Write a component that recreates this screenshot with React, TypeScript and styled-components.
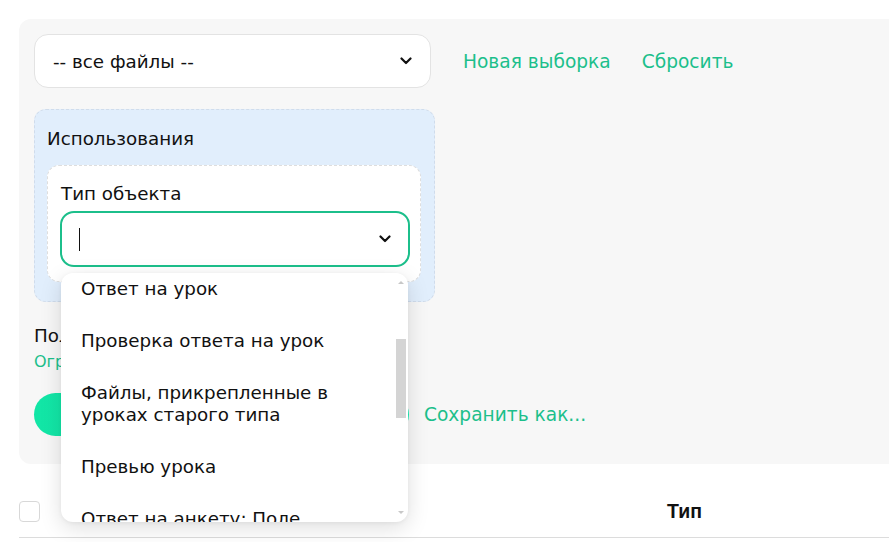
import React, { useLayoutEffect, useRef } from "react";
import styled, { createGlobalStyle } from "styled-components";

const FONT = `"DejaVu Sans", "Noto Sans", sans-serif`;
const GREEN = "#1cbf8b";
const FS = "18.3px";

const Global = createGlobalStyle`
  html, body { margin: 0; padding: 0; background: #fff; }
  body { font-family: ${FONT}; color: #111; overflow: hidden; }
  * { box-sizing: border-box; }
`;

const Page = styled.div`
  width: 889px;
  height: 542px;
  overflow: hidden;
  padding: 19px 0 0 19px;
`;

const FilterPanel = styled.section`
  width: 900px;
  height: 445px;
  background: #f7f7f7;
  border-radius: 12px 0 0 12px;
  padding: 15px 15px;
  display: flex;
  flex-direction: column;
`;

const TopRow = styled.div`
  display: flex;
  align-items: center;
`;

const Select = styled.div`
  width: 397px;
  height: 54px;
  background: #fff;
  border: 1px solid #e3e3e3;
  border-radius: 14px;
  display: flex;
  align-items: center;
  justify-content: space-between;
  padding: 0 18px 0 18px;
  font-size: ${FS};
  color: #111;
`;

const Links = styled.div`
  display: flex;
  gap: 31px;
  margin-left: 32px;
  padding-top: 2px;
`;

const Link = styled.a`
  color: ${GREEN};
  font-size: 18.6px;
  line-height: 22px;
  text-decoration: none;
  cursor: pointer;
`;

const UsageBox = styled.div`
  margin-top: 21px;
  width: 401px;
  height: 193px;
  background: #e1eefc;
  border: 1px dashed #d0dceb;
  border-radius: 12px;
  padding: 18px 12px 0 12px;
`;

const BoxTitle = styled.div`
  font-size: ${FS};
  line-height: 22px;
  color: #111;
`;

const FieldCard = styled.div`
  margin-top: 15px;
  width: 374px;
  height: 117px;
  background: #fff;
  border: 1px dashed #dedede;
  border-radius: 12px;
  padding: 17px 10px 0 12px;
  position: relative;
`;

const FieldLabel = styled.div`
  font-size: ${FS};
  line-height: 22px;
  margin-left: 1px;
`;

const Combo = styled.div`
  margin-top: 6px;
  width: 350px;
  height: 56px;
  border: 2px solid ${GREEN};
  border-radius: 14px;
  background: #fff;
  display: flex;
  align-items: center;
  justify-content: space-between;
  padding: 0 17px 0 17px;
`;

const Caret = styled.span`
  width: 1px;
  height: 23px;
  background: #111;
`;

const Dropdown = styled.div`
  position: absolute;
  left: 13px;
  top: 107px;
  width: 347px;
  height: 249px;
  background: #fff;
  border-radius: 12px;
  box-shadow: 0 6px 22px rgba(0, 0, 0, 0.13), 0 1px 4px rgba(0, 0, 0, 0.05);
  overflow: hidden;
  z-index: 10;
`;

const OptionList = styled.ul`
  list-style: none;
  margin: 0;
  padding: 10px 0;
  height: 100%;
  overflow-y: scroll;
  scrollbar-width: none;
  &::-webkit-scrollbar { display: none; }
`;

const Option = styled.li`
  padding: 15px 40px 15px 20px;
  font-size: ${FS};
  line-height: 22px;
  color: #111;
`;

const ScrollTrack = styled.div`
  position: absolute;
  right: 2px;
  top: 0;
  bottom: 0;
  width: 10px;
`;

const ScrollThumb = styled.div`
  position: absolute;
  left: 0;
  right: 0;
  top: 66px;
  height: 79px;
  background: #d4d4d4;
`;

const Arrow = styled.div<{ $dir: "up" | "down" }>`
  position: absolute;
  left: 2px;
  width: 0;
  height: 0;
  border-left: 3px solid transparent;
  border-right: 3px solid transparent;
  ${(p) =>
    p.$dir === "up"
      ? `top: 8px; border-bottom: 3px solid #c8c8c8;`
      : `bottom: 8px; border-top: 3px solid #c8c8c8;`}
`;

const Section = styled.div`
  margin-top: 23px;
`;

const SectionTitle = styled.div`
  font-size: ${FS};
  line-height: 22px;
`;

const SectionHint = styled.div`
  margin-top: 5px;
  font-size: 16px;
  line-height: 20px;
  color: ${GREEN};
`;

const Actions = styled.div`
  margin-top: 21px;
  display: flex;
  align-items: center;
  gap: 15px;
`;

const PrimaryButton = styled.button`
  width: 375px;
  height: 43px;
  border: none;
  border-radius: 22px;
  background: linear-gradient(90deg, #12e6a6, #17f0b6);
  color: #fff;
  font-family: ${FONT};
  font-size: 16px;
`;

const TableHead = styled.div`
  margin-top: 37px;
  width: 870px;
  height: 37px;
  border-bottom: 1px solid #dcdcdc;
  display: flex;
  align-items: flex-start;
`;

const Checkbox = styled.span`
  width: 21px;
  height: 21px;
  border: 1px solid #d8d8d8;
  border-radius: 4px;
  background: #fff;
`;

const HeadCell = styled.div`
  margin-left: 627px;
  margin-top: -1px;
  font-family: "Liberation Sans", Arial, sans-serif;
  font-weight: 700;
  font-size: 19.5px;
  line-height: 22px;
`;

const Chevron = () => (
  <svg width="12" height="8" viewBox="0 0 12 8" fill="none">
    <path d="M1.5 1.5 6 6l4.5-4.5" stroke="#111" strokeWidth="2.2" strokeLinecap="round" strokeLinejoin="round" />
  </svg>
);

const options = [
  "Урок",
  "Задание урока",
  "Файл в уроке",
  "Ответ на урок",
  "Проверка ответа на урок",
  "Файлы, прикрепленные в уроках старого типа",
  "Превью урока",
  "Ответ на анкету: Поле анкеты",
  "Вебинар",
  "Запись вебинара",
  "Рассылка",
  "Пользователь",
];

export default function App() {
  const listRef = useRef<HTMLUListElement>(null);
  useLayoutEffect(() => {
    if (listRef.current) listRef.current.scrollTop = 176;
  }, []);
  return (
    <Page>
      <Global />
      <FilterPanel>
        <TopRow>
          <Select>
            <span>-- все файлы --</span>
            <Chevron />
          </Select>
          <Links>
            <Link>Новая выборка</Link>
            <Link>Сбросить</Link>
          </Links>
        </TopRow>
        <UsageBox>
          <BoxTitle>Использования</BoxTitle>
          <FieldCard>
            <FieldLabel>Тип объекта</FieldLabel>
            <Combo>
              <Caret />
              <Chevron />
            </Combo>
            <Dropdown>
              <OptionList ref={listRef}>
                {options.map((o) => (
                  <Option key={o}>{o}</Option>
                ))}
              </OptionList>
              <ScrollTrack>
                <Arrow $dir="up" />
                <ScrollThumb />
                <Arrow $dir="down" />
              </ScrollTrack>
            </Dropdown>
          </FieldCard>
        </UsageBox>
        <Section>
          <SectionTitle>Поля</SectionTitle>
          <SectionHint>Ограничения не заданы</SectionHint>
        </Section>
        <Actions>
          <PrimaryButton>Применить</PrimaryButton>
          <Link>Сохранить как...</Link>
        </Actions>
      </FilterPanel>
      <TableHead>
        <Checkbox />
        <HeadCell>Тип</HeadCell>
      </TableHead>
    </Page>
  );
}
